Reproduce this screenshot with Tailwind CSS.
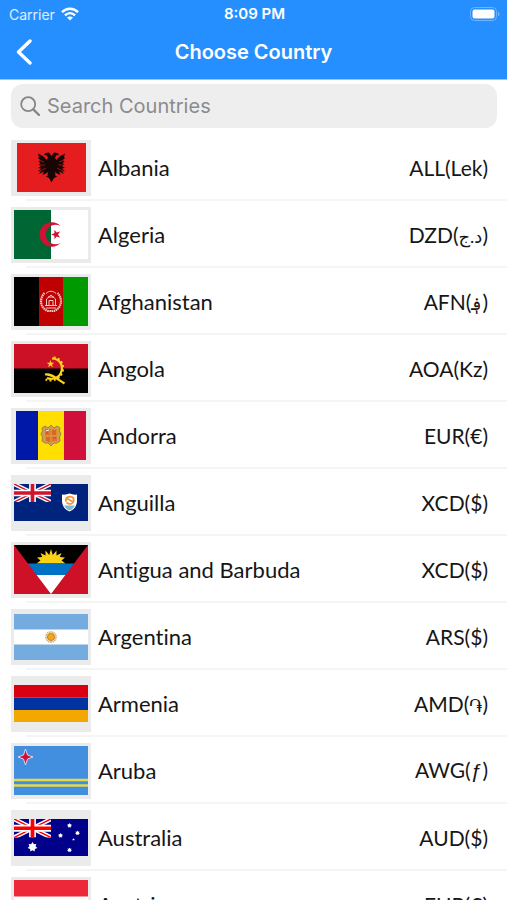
<!DOCTYPE html>
<html lang="en">
<head>
  <meta charset="UTF-8" />
  <meta name="viewport" content="width=device-width, initial-scale=1.0"/>
  <title>Choose Country</title>
  <script src="https://cdn.jsdelivr.net/npm/@tailwindcss/browser@4"></script>
</head>
<body class="h-screen overflow-hidden bg-white font-[Lato,'DejaVu_Sans',sans-serif] text-[#161616] flex flex-col">

  <!-- shared flag parts -->
  <svg class="hidden">
    <symbol id="union-jack" viewBox="0 0 60 30" preserveAspectRatio="none">
      <path d="M0 0L60 30M60 0L0 30" stroke="#fff" stroke-width="7"/>
      <path d="M0 0L60 30M60 0L0 30" stroke="currentColor" stroke-width="2.5"/>
      <path d="M30 0V30M0 15H60" stroke="#fff" stroke-width="11"/>
      <path d="M30 0V30M0 15H60" stroke="currentColor" stroke-width="6"/>
    </symbol>
    <symbol id="star" viewBox="-10 -10 20 20">
      <path d="M0 -10L2.4 -3.2L9.5 -3.1L3.8 1.2L5.9 8.1L0 4L-5.9 8.1L-3.8 1.2L-9.5 -3.1L-2.4 -3.2Z" fill="currentColor"/>
    </symbol>
    <symbol id="star7" viewBox="-10 -10 20 20">
      <path d="M0 -10L2.8 -5.5L7.8 -6.2L6 -1.3L9.700 2.200L4.800 4L4.300 9L0 6.300L-4.300 9L-4.800 4L-9.700 2.200L-6 -1.300L-7.800 -6.200L-2.800 -5.500Z" fill="currentColor"/>
    </symbol>
  </svg>

  <header class="shrink-0 bg-[#268fff] text-white font-[Inter,sans-serif] border-b border-[#8fc8ff]">
    <div class="grid grid-cols-3 items-center h-7 pl-[9px] pr-[7px] text-[14px]">
      <div class="flex items-center gap-1.5 text-white/85">
        <span>Carrier</span>
        <svg class="w-[18px] h-[14px]" viewBox="0 0 18 14" fill="none" stroke="#fff" stroke-width="2.4">
          <path d="M1 5.2C5.4 .6 12.6 .6 17 5.2"/>
          <path d="M4 8.3C6.8 5.4 11.2 5.4 14 8.3"/>
          <path d="M6 10.6C7.6 9 10.4 9 12 10.6L9 13.6Z" fill="#fff" stroke="none"/>
        </svg>
      </div>
      <span class="text-center text-[15px] font-semibold">8:09 PM</span>
      <svg class="justify-self-end w-[30px] h-[14px]" viewBox="0 0 30 14">
        <rect x=".5" y=".5" width="26" height="13" rx="4" fill="none" stroke="#6fb4ff"/>
        <rect x="2.5" y="2.5" width="22" height="9" rx="2.2" fill="#fff"/>
        <path d="M28 4.7C30 5.4 30 8.6 28 9.3Z" fill="#6fb4ff"/>
      </svg>
    </div>
    <div class="grid grid-cols-[60px_1fr_60px] items-center h-[51px] pb-1">
      <button type="button" aria-label="Back" class="pl-4">
        <svg class="w-4 h-[26px]" viewBox="0 0 16 26" fill="none" stroke="#fff" stroke-width="3.4" stroke-linecap="round" stroke-linejoin="round">
          <path d="M14 2L2.5 13L14 24"/>
        </svg>
      </button>
      <h1 class="text-center text-[20px] font-semibold">Choose Country</h1>
    </div>
  </header>

  <label class="shrink-0 flex items-center gap-[7px] h-11 mt-1 ml-[11px] mr-[10px] pl-[9px] rounded-xl bg-[#eeeeee] font-[Inter,sans-serif]">
    <svg class="w-5 h-5" viewBox="0 0 20 20" fill="none" stroke="#85858a" stroke-width="1.8" stroke-linecap="round">
      <circle cx="8.2" cy="8.2" r="7"/>
      <path d="M13.3 13.3L19 19" stroke-width="2.4"/>
    </svg>
    <input type="search" aria-label="Search Countries" placeholder="Search Countries" class="flex-1 min-w-0 bg-transparent text-[20px] placeholder:text-[#8b8b8f] outline-none"/>
  </label>

  <ul class="flex-1 min-h-0 overflow-hidden pt-1 text-[22px] [font-variant-ligatures:none]">
    <li>
      <button type="button" class="relative w-full h-[67px] flex items-center pt-1 pl-[11px] pr-[19px] text-left after:absolute after:-bottom-0.5 after:left-[26px] after:right-0 after:h-0.5 after:bg-[#f5f5f5]">
        <span class="w-20 h-14 mr-[7px] bg-[#ebebeb] flex items-center justify-center">
          <svg class="w-[69px] h-[49px]" viewBox="0 0 69 49">
            <path fill="#e51d1f" d="M0 0H69V49H0Z"/>
            <path d="M34.500 13L32 9.500L28.500 10L27 12L30 12.500L31 15L29.500 17L28 15L25 12.500L21 10.500L22 14L21 15L23 17L21.500 18.500L23.500 20L21.500 21.500L24 23L21 25L24 25.500L21 28.500L24 28L22 31L27 28.500L25.500 32L29 30.500L31 29L30.500 33L28.500 33.500L32 35L34.500 39.500L37 35L40.500 33.500L38.500 33L38 29L40 30.500L43.500 32L42 28.500L47 31L45 28L48 28.500L45 25.500L48 25L45 23L47.500 21.500L45.500 20L47.500 18.500L46 17L48 15L47 14L48 10.500L44 12.500L41 15L39.500 17L38 15L39 12.500L42 12L40.500 10L37 9.500Z" fill="#180606"/>
            <path d="M27 19L22 17M28 22L22 22M29 25L23 28M42 19L47 17M41 22L47 22M40 25L46 28" stroke="#e51d1f" stroke-width=".6"/>
          </svg>
        </span>
        <span class="flex-1">Albania</span>
        <span class="text-[21px]">ALL(Lek)</span>
      </button>
    </li>
    <li>
      <button type="button" class="relative w-full h-[67px] flex items-center pt-1 pl-[11px] pr-[19px] text-left after:absolute after:-bottom-0.5 after:left-[26px] after:right-0 after:h-0.5 after:bg-[#f5f5f5]">
        <span class="w-20 h-14 mr-[7px] bg-[#ebebeb] flex items-center justify-center">
          <svg class="w-[74px] h-[49px]" viewBox="0 0 74 49">
            <path fill="#fff" d="M0 0H74V49H0Z"/>
            <path fill="#006633" d="M0 0H37V49H0Z"/>
            <path d="M46.500 16A12.200 12.200 0 1 0 46.500 33A9.800 9.800 0 1 1 46.500 16Z" fill="#d21034"/>
            <use href="#star" x="36.500" y="19.500" width="11" height="10" class="text-[#d21034]" transform="rotate(-90 42 24.500)"/>
          </svg>
        </span>
        <span class="flex-1">Algeria</span>
        <span class="text-[21px]">DZD(<span class="text-[18px]">د.ج</span>)</span>
      </button>
    </li>
    <li>
      <button type="button" class="relative w-full h-[67px] flex items-center pt-1 pl-[11px] pr-[19px] text-left after:absolute after:-bottom-0.5 after:left-[26px] after:right-0 after:h-0.5 after:bg-[#f5f5f5]">
        <span class="w-20 h-14 mr-[7px] bg-[#ebebeb] flex items-center justify-center">
          <svg class="w-[74px] h-[49px]" viewBox="0 0 74 49">
            <path d="M0 0H25V49H0Z"/>
            <path fill="#bf0000" d="M25 0H49V49H25Z"/>
            <path fill="#009900" d="M49 0H74V49H49Z"/>
            <g fill="none" stroke="#f3c9c9">
              <path d="M30.500 16C25 22 26 31 34 34H40C48 31 49 22 43.500 16" stroke-width="2.200" stroke-dasharray="1.500 .6"/>
              <path d="M32 16.500C35 13.500 39 13.500 42 16.500"/>
              <path d="M31 28.500H43M32 31H42M32.500 28V22L37 18L41.500 22V28M35 28V23.500H39V28M34 20H40"/>
            </g>
          </svg>
        </span>
        <span class="flex-1">Afghanistan</span>
        <span class="text-[21px]">AFN(<span class="text-[18px]">؋</span>)</span>
      </button>
    </li>
    <li>
      <button type="button" class="relative w-full h-[67px] flex items-center pt-1 pl-[11px] pr-[19px] text-left after:absolute after:-bottom-0.5 after:left-[26px] after:right-0 after:h-0.5 after:bg-[#f5f5f5]">
        <span class="w-20 h-14 mr-[7px] bg-[#ebebeb] flex items-center justify-center">
          <svg class="w-[74px] h-[49px]" viewBox="0 0 74 49">
            <path d="M0 0H74V49H0Z"/>
            <path fill="#cc1126" d="M0 0H74V24.500H0Z"/>
            <g fill="none" stroke="#ffd21e">
              <path d="M38 14.500C46 15 49 21 47.500 27C46 33.500 39 36.500 33 34" stroke-width="2.200"/>
              <path d="M39.500 13.500C48 14 50.500 22 48.500 28C46 35.500 38 38 31.500 35.500" stroke-width="2" stroke-dasharray="2 2.300"/>
              <path d="M31 30.500C36 29 42 34 50.500 39.500" stroke-width="2.200"/>
            </g>
            <use href="#star" x="32.500" y="16" width="8" height="8" class="text-[#ffd21e]"/>
          </svg>
        </span>
        <span class="flex-1">Angola</span>
        <span class="text-[21px]">AOA(Kz)</span>
      </button>
    </li>
    <li>
      <button type="button" class="relative w-full h-[67px] flex items-center pt-1 pl-[11px] pr-[19px] text-left after:absolute after:-bottom-0.5 after:left-[26px] after:right-0 after:h-0.5 after:bg-[#f5f5f5]">
        <span class="w-20 h-14 mr-[7px] bg-[#ebebeb] flex items-center justify-center">
          <svg class="w-[70px] h-[49px]" viewBox="0 0 70 49">
            <path fill="#0018a8" d="M0 0H22V49H0Z"/>
            <path fill="#fedf00" d="M22 0H48V49H22Z"/>
            <path fill="#d0103a" d="M48 0H70V49H48Z"/>
            <path d="M26 17L29 15L32 17L35 14L38 17L41 15L44 17L43.500 20L45 23L43.500 26L44 30L41 32L38 32L35 35L32 32L29 32L26 30L26.500 26L25 23L26.500 20Z" fill="#c8a250" stroke="#a97f45"/>
            <path d="M29 18H34.500V24.500H29ZM35.500 25.500H41V30H37L35.500 32Z" fill="#e8702a"/>
            <path d="M35.500 18H41V24.500H35.500ZM29 25.500H34.500V32L30 30Z" fill="#e58a1c"/>
            <path d="M31 19V23M37 19V24M39 19V24M31 26V30M33 26V31M37 27H40" stroke="#d0303a" stroke-width=".8"/>
            <path d="M30 20L33 19" stroke="#fff"/>
          </svg>
        </span>
        <span class="flex-1">Andorra</span>
        <span class="text-[21px]">EUR(€)</span>
      </button>
    </li>
    <li>
      <button type="button" class="relative w-full h-[67px] flex items-center pt-1 pl-[11px] pr-[19px] text-left after:absolute after:-bottom-0.5 after:left-[26px] after:right-0 after:h-0.5 after:bg-[#f5f5f5]">
        <span class="w-20 h-14 mr-[7px] bg-[#ebebeb] flex items-center justify-center">
          <svg class="w-[74px] h-[37px]" viewBox="0 0 74 37">
            <path fill="#00247d" d="M0 0H74V37H0Z"/>
            <use href="#union-jack" width="37" height="18" class="text-[#cf142b]"/>
            <path d="M48 10.500Q52 11 55.500 9.500Q59 11 63 10.500V18Q62 25 55.500 27.500Q49 25 48 18Z" fill="#fff"/>
            <path d="M50 21.500H61Q59.500 25 55.500 26.500Q51.500 25 50 21.500Z" fill="#7fb8d8"/>
            <path d="M52 17C51 12.500 57 11.500 59.500 14M59.500 15C60.500 19.500 56 21 53 19M53 14.500L57.500 17" fill="none" stroke="#f3973a" stroke-width="1.800" stroke-linecap="round"/>
          </svg>
        </span>
        <span class="flex-1">Anguilla</span>
        <span class="text-[21px]">XCD($)</span>
      </button>
    </li>
    <li>
      <button type="button" class="relative w-full h-[67px] flex items-center pt-1 pl-[11px] pr-[19px] text-left after:absolute after:-bottom-0.5 after:left-[26px] after:right-0 after:h-0.5 after:bg-[#f5f5f5]">
        <span class="w-20 h-14 mr-[7px] bg-[#ebebeb] flex items-center justify-center">
          <svg class="w-[74px] h-[49px]" viewBox="0 0 74 49">
            <path d="M0 0H74V49H0Z"/>
            <path d="M37 4L38.800 10L42.500 5.500L42.500 10.500L47.500 8L45.800 12L51 12.500L47.500 15.500L51.500 18.500H22.500L26.500 15.500L23 12.500L28.200 12L26.500 8L31.500 10.500L31.500 5.500L35.200 10Z" fill="#fcd116"/>
            <path fill="#0072c6" d="M0 18.500H74V30H0Z"/>
            <path fill="#fff" d="M0 30H74V49H0Z"/>
            <path fill="#ce1126" d="M0 0L37 49H0ZM74 0L37 49H74Z"/>
          </svg>
        </span>
        <span class="flex-1">Antigua and Barbuda</span>
        <span class="text-[21px]">XCD($)</span>
      </button>
    </li>
    <li>
      <button type="button" class="relative w-full h-[67px] flex items-center pt-1 pl-[11px] pr-[19px] text-left after:absolute after:-bottom-0.5 after:left-[26px] after:right-0 after:h-0.5 after:bg-[#f5f5f5]">
        <span class="w-20 h-14 mr-[7px] bg-[#ebebeb] flex items-center justify-center">
          <svg class="w-[74px] h-[46px]" viewBox="0 0 74 46">
            <path fill="#74acdf" d="M0 0H74V46H0Z"/>
            <path fill="#fff" d="M0 15.500H74V30.500H0Z"/>
            <circle cx="37" cy="23" r="5" fill="none" stroke="#d9a45e" stroke-width="1.800" stroke-dasharray="1 .6"/>
            <circle cx="37" cy="23" r="3.600" fill="#f0a818" stroke="#b5722a" stroke-width=".8"/>
          </svg>
        </span>
        <span class="flex-1">Argentina</span>
        <span class="text-[21px]">ARS($)</span>
      </button>
    </li>
    <li>
      <button type="button" class="relative w-full h-[67px] flex items-center pt-1 pl-[11px] pr-[19px] text-left after:absolute after:-bottom-0.5 after:left-[26px] after:right-0 after:h-0.5 after:bg-[#f5f5f5]">
        <span class="w-20 h-14 mr-[7px] bg-[#ebebeb] flex items-center justify-center">
          <svg class="w-[74px] h-[37px]" viewBox="0 0 74 37">
            <path fill="#d90012" d="M0 0H74V12.500H0Z"/>
            <path fill="#0033a0" d="M0 12.500H74V25H0Z"/>
            <path fill="#f2a800" d="M0 25H74V37H0Z"/>
          </svg>
        </span>
        <span class="flex-1">Armenia</span>
        <span class="text-[21px]">AMD(<span class="text-[18px] font-['Noto_Sans','DejaVu_Sans',sans-serif]">֏</span>)</span>
      </button>
    </li>
    <li>
      <button type="button" class="relative w-full h-[67px] flex items-center pt-1 pl-[11px] pr-[19px] text-left after:absolute after:-bottom-0.5 after:left-[26px] after:right-0 after:h-0.5 after:bg-[#f5f5f5]">
        <span class="w-20 h-14 mr-[7px] bg-[#ebebeb] flex items-center justify-center">
          <svg class="w-[74px] h-[49px]" viewBox="0 0 74 49">
            <path fill="#418fde" d="M0 0H74V49H0Z"/>
            <path d="M0 34H74M0 39.500H74" stroke="#e6d94a" stroke-width="2.600"/>
            <path d="M11.500 3L13.500 9L19 11L13.500 13L11.500 19L9.500 13L4 11L9.500 9Z" fill="#d21034" stroke="#e4d3ea"/>
          </svg>
        </span>
        <span class="flex-1">Aruba</span>
        <span class="text-[21px]">AWG(<span class="font-['Liberation_Sans',sans-serif]">ƒ</span>)</span>
      </button>
    </li>
    <li>
      <button type="button" class="relative w-full h-[67px] flex items-center pt-1 pl-[11px] pr-[19px] text-left after:absolute after:-bottom-0.5 after:left-[26px] after:right-0 after:h-0.5 after:bg-[#f5f5f5]">
        <span class="w-20 h-14 mr-[7px] bg-[#ebebeb] flex items-center justify-center">
          <svg class="w-[74px] h-[37px]" viewBox="0 0 74 37">
            <path fill="#00008b" d="M0 0H74V37H0Z"/>
            <use href="#union-jack" width="37" height="18.500" class="text-[#ff0000]"/>
            <g class="text-white">
              <use href="#star7" x="13.500" y="23" width="10" height="10"/>
              <use href="#star7" x="53" y="4" width="5" height="5"/>
              <use href="#star7" x="44" y="14" width="5" height="5"/>
              <use href="#star7" x="61" y="11.500" width="5" height="5"/>
              <use href="#star7" x="53" y="28.500" width="5" height="5"/>
              <use href="#star" x="58" y="19" width="3" height="3"/>
            </g>
          </svg>
        </span>
        <span class="flex-1">Australia</span>
        <span class="text-[21px]">AUD($)</span>
      </button>
    </li>
    <li>
      <button type="button" class="relative w-full h-[67px] flex items-center pt-1 pl-[11px] pr-[19px] text-left after:absolute after:-bottom-0.5 after:left-[26px] after:right-0 after:h-0.5 after:bg-[#f5f5f5]">
        <span class="w-20 h-14 mr-[7px] bg-[#ebebeb] flex items-center justify-center">
          <svg class="w-[74px] h-[49px]" viewBox="0 0 74 49">
            <path fill="#ed2939" d="M0 0H74V49H0Z"/>
            <path fill="#fff" d="M0 16.500H74V32.500H0Z"/>
          </svg>
        </span>
        <span class="flex-1">Austria</span>
        <span class="text-[21px]">EUR(€)</span>
      </button>
    </li>
  </ul>

</body>
</html>
